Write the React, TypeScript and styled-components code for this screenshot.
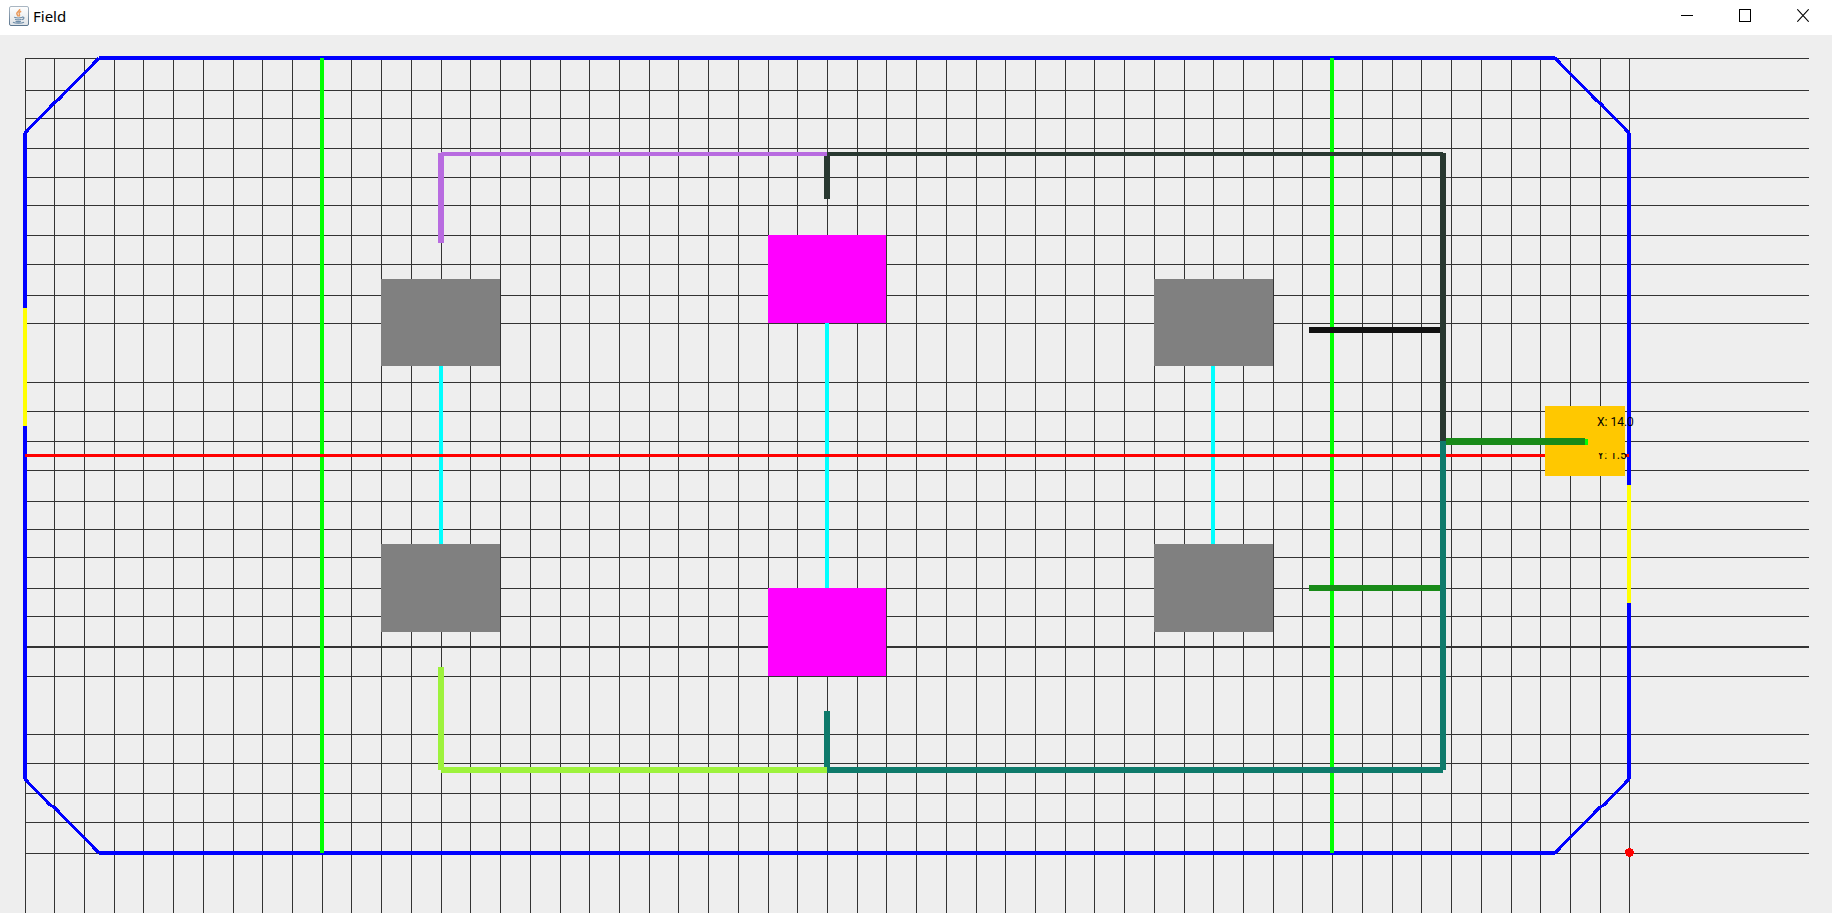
import React from "react";
import styled, { createGlobalStyle } from "styled-components";

const GlobalStyle = createGlobalStyle`
  body {
    margin: 0;
    background: #eeeeee;
  }
`;

const Window = styled.main`
  display: flex;
  flex-direction: column;
  min-height: 100vh;
  background: #eeeeee;
`;

const TitleBar = styled.header`
  display: flex;
  align-items: stretch;
  justify-content: space-between;
  height: 35px;
  flex: none;
  background: #ffffff;
`;

const Caption = styled.div`
  display: flex;
  align-items: center;
  gap: 4px;
  padding: 0 0 4px 9px;
`;

const Title = styled.h1`
  margin: 0;
  font: 400 15px/20px "Noto Sans", "Segoe UI", sans-serif;
  color: #000000;
`;

const Controls = styled.div`
  display: flex;
`;

const ControlButton = styled.button`
  display: flex;
  align-items: flex-start;
  justify-content: center;
  width: 58px;
  padding: 9px 0 0;
  border: 0;
  background: transparent;

  &:hover {
    background: #e5e5e5;
  }
`;

const Canvas = styled.svg`
  display: block;
  flex: 1;
  width: 100%;
  min-height: 860px;
  shape-rendering: crispEdges;
`;

const GridRow = styled.rect`
  width: calc(100% - 48px);
  fill: #333333;
`;

const GridColumn = styled.rect`
  width: 1px;
  height: 100%;
  fill: #333333;
`;

const Corner = styled.polyline`
  fill: none;
  stroke: #0000ff;
  stroke-width: 3;
`;

const Readout = styled.text`
  font: 400 12px Roboto, Arial, sans-serif;
  fill: #000000;
`;

const columns = [
  25, 54, 84, 114, 143, 173, 203, 233, 262, 292, 322, 351, 381, 411, 441, 470,
  500, 530, 560, 589, 619, 649, 678, 708, 738, 768, 797, 827, 857, 886, 916,
  946, 976, 1005, 1035, 1065, 1094, 1124, 1154, 1184, 1213, 1243, 1273, 1302,
  1332, 1362, 1392, 1421, 1451, 1481, 1511, 1540, 1570, 1600, 1629,
];

const rows = [
  23, 55, 83, 113, 142, 170, 200, 229, 260, 288, 347, 376, 406, 435, 466, 494,
  522, 553, 581, 611, 612, 641, 699, 728, 758, 787, 818,
];

// [x, y, width, height, colour], painted in order
type Block = [number, number, number, number, string];

const BLUE = "#0000ff";
const YELLOW = "#ffff00";
const LIME = "#00ff00";
const CYAN = "#00ffff";
const GREY = "#808080";
const MAGENTA = "#ff00ff";
const VIOLET = "#b86be0";
const PINE = "#283830";
const TEAL = "#0e7a6b";
const LEAF = "#9df23c";
const GREEN = "#188a18";

const walls: Block[] = [
  [99, 21, 1456, 4, BLUE],
  [99, 816, 1456, 4, BLUE],
  [23, 98, 4, 175, BLUE],
  [23, 273, 4, 118, YELLOW],
  [23, 391, 4, 353, BLUE],
  [1627, 98, 4, 352, BLUE],
  [1627, 450, 4, 118, YELLOW],
  [1627, 568, 4, 176, BLUE],
];

const obstacles: Block[] = [
  [320, 23, 4, 795, LIME],
  [1330, 23, 4, 795, LIME],
  [439, 331, 4, 178, CYAN],
  [825, 288, 4, 265, CYAN],
  [1211, 331, 4, 178, CYAN],
  [381, 244, 119, 87, GREY],
  [381, 509, 119, 88, GREY],
  [1154, 244, 119, 87, GREY],
  [1154, 509, 119, 88, GREY],
  [768, 200, 118, 88, MAGENTA],
  [768, 553, 118, 88, MAGENTA],
  [25, 419, 1604, 3, "#ff0000"],
  [1545, 371, 80, 70, "#ffc800"],
];

const routes: Block[] = [
  [1309, 292, 134, 6, "#111111"],
  [1309, 550, 134, 6, GREEN],
  [1585, 404, 3, 6, LIME],
  [1443, 403, 142, 7, GREEN],
  [824, 118, 6, 46, PINE],
  [827, 117, 616, 4, PINE],
  [1440, 118, 6, 288, PINE],
  [438, 118, 6, 90, VIOLET],
  [441, 117, 386, 4, VIOLET],
  [824, 676, 6, 59, TEAL],
  [827, 732, 616, 6, TEAL],
  [1440, 406, 6, 329, TEAL],
  [438, 632, 6, 103, LEAF],
  [441, 732, 386, 6, LEAF],
];

function Blocks({ items }: { items: Block[] }) {
  return (
    <g>
      {items.map(([x, y, width, height, fill]) => (
        <rect key={`${x}-${y}-${fill}`} x={x} y={y} width={width} height={height} fill={fill} />
      ))}
    </g>
  );
}

function JavaIcon() {
  return (
    <svg width="20" height="20" viewBox="0 0 20 20" aria-hidden="true">
      <defs>
        <linearGradient id="tile" x1="0" y1="0" x2="0" y2="1">
          <stop offset="0" stopColor="#ffffff" />
          <stop offset="1" stopColor="#dfe3e7" />
        </linearGradient>
        <linearGradient id="edge" x1="0" y1="0" x2="0" y2="1">
          <stop offset="0" stopColor="#a9b6c2" />
          <stop offset="1" stopColor="#5b7690" />
        </linearGradient>
      </defs>
      <rect x="0.5" y="0.5" width="19" height="19" rx="1.5" fill="url(#tile)" stroke="url(#edge)" />
      <path
        d="M10.6 3c.9 1.800-2.800 2.600-2.800 4.600 0 1.300 1.200 1.900 1.600 3M12.200 5.200c-1.600.7-2.400 1.500-1.900 2.600.5 1 .4 1.800-.4 2.600"
        fill="none"
        stroke="#ea9a5c"
        strokeWidth="1.500"
      />
      <path
        d="M5.200 11.300c2 .7 6 .7 8 0M6 13.300c2 .8 4.500.8 6.400 0M6.500 15.200c1.600.6 3.800.6 5.400 0M13 11.200c2.600-.7 2.600 2-.2 2.500M4 16.200c2.500 1.400 8.500 1.300 11 0"
        fill="none"
        stroke="#6d8ca8"
        strokeWidth="1.200"
      />
    </svg>
  );
}

export default function App() {
  return (
    <>
      <GlobalStyle />
      <Window>
        <TitleBar>
          <Caption>
            <JavaIcon />
            <Title>Field</Title>
          </Caption>
          <Controls>
            <ControlButton type="button" aria-label="Minimize">
              <svg width="12" height="13" shapeRendering="crispEdges">
                <rect y="6" width="12" height="1" />
              </svg>
            </ControlButton>
            <ControlButton type="button" aria-label="Maximize">
              <svg width="12" height="13" shapeRendering="crispEdges">
                <rect x="0.5" y="0.5" width="11" height="12" fill="none" stroke="#000000" />
              </svg>
            </ControlButton>
            <ControlButton type="button" aria-label="Close">
              <svg width="12" height="13">
                <path d="M0.300 0.300 11.700 12.700M11.700 0.300 0.300 12.700" stroke="#000000" strokeWidth="1.100" />
              </svg>
            </ControlButton>
          </Controls>
        </TitleBar>
        <Canvas role="img" aria-label="Field map with robot position">
          <defs>
            <clipPath id="robot-y">
              <rect x="1590" y="418" width="60" height="12" />
            </clipPath>
          </defs>
          {rows.map((y) => (
            <GridRow key={y} x="25" y={y} height="1" />
          ))}
          {columns.map((x) => (
            <GridColumn key={x} x={x} y="23" />
          ))}
          <Blocks items={walls} />
          <Corner points="25,98 54,68 58,65 99,23" />
          <Corner points="1555,23 1597,66 1600,68 1629,98" />
          <Corner points="25,744 50,770 54,772 99,818" />
          <Corner points="1555,818 1600,772 1604,770 1629,744" />
          <Blocks items={obstacles} />
          <Blocks items={routes} />
          <circle cx="1629.500" cy="817.500" r="4.500" fill="#ff0000" />
          <Readout x="1597" y="391">X: 14.0</Readout>
          <Readout x="1597" y="424" clipPath="url(#robot-y)">Y: 1.5</Readout>
        </Canvas>
      </Window>
    </>
  );
}
